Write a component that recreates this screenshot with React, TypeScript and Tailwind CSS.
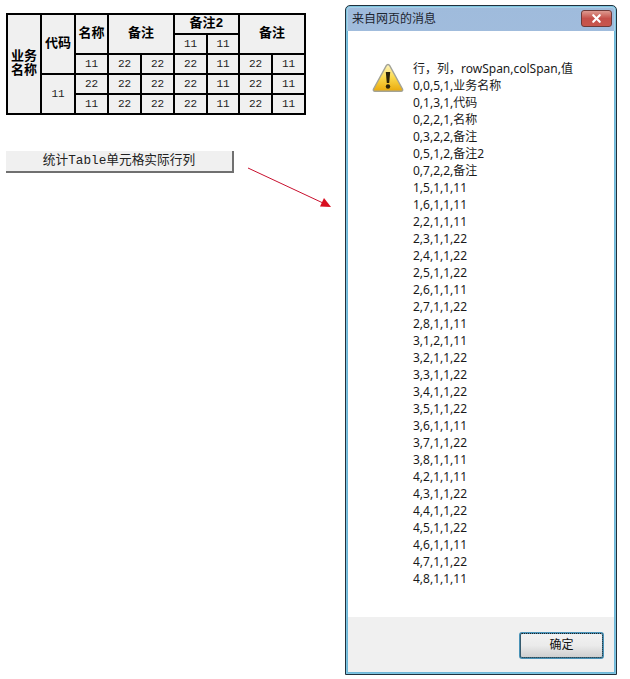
import React from "react";
import { X } from "lucide-react";

const LINES = [
  "行，列，rowSpan,colSpan,值",
  "0,0,5,1,业务名称",
  "0,1,3,1,代码",
  "0,2,2,1,名称",
  "0,3,2,2,备注",
  "0,5,1,2,备注2",
  "0,7,2,2,备注",
  "1,5,1,1,11",
  "1,6,1,1,11",
  "2,2,1,1,11",
  "2,3,1,1,22",
  "2,4,1,1,22",
  "2,5,1,1,22",
  "2,6,1,1,11",
  "2,7,1,1,22",
  "2,8,1,1,11",
  "3,1,2,1,11",
  "3,2,1,1,22",
  "3,3,1,1,22",
  "3,4,1,1,22",
  "3,5,1,1,22",
  "3,6,1,1,11",
  "3,7,1,1,22",
  "3,8,1,1,11",
  "4,2,1,1,11",
  "4,3,1,1,22",
  "4,4,1,1,22",
  "4,5,1,1,22",
  "4,6,1,1,11",
  "4,7,1,1,22",
  "4,8,1,1,11",
];

const COLS = [34, 34, 33, 33, 33, 33, 32, 33, 33];

const Th: React.FC<{ rowSpan?: number; colSpan?: number; children: React.ReactNode }> = ({
  rowSpan,
  colSpan,
  children,
}) => (
  <td
    rowSpan={rowSpan}
    colSpan={colSpan}
    className="border-2 border-black p-0 text-center align-middle text-[13px] leading-[14px] font-bold"
  >
    {children}
  </td>
);

const Td: React.FC<{ rowSpan?: number; children: React.ReactNode }> = ({ rowSpan, children }) => (
  <td rowSpan={rowSpan} className="border-2 border-black p-0 text-center align-middle text-[11px] leading-none text-[#222]">
    {children}
  </td>
);

const DataCells = () => (
  <>
    <Td>22</Td>
    <Td>22</Td>
    <Td>22</Td>
    <Td>11</Td>
    <Td>22</Td>
    <Td>11</Td>
  </>
);

const WarningIcon = () => (
  <svg width="32" height="30" viewBox="0 0 32 30" className="shrink-0">
    <defs>
      <linearGradient id="warn" x1="0" y1="0" x2="0" y2="1">
        <stop offset="0" stopColor="#fff6c0" />
        <stop offset="0.5" stopColor="#fad84a" />
        <stop offset="1" stopColor="#e9a90c" />
      </linearGradient>
    </defs>
    <path
      d="M16 1.500c.8 0 1.300.5 1.700 1.200l12.800 23.300c.6 1.200-.1 2.200-1.400 2.200H2.900c-1.300 0-2-1-1.400-2.200L14.300 2.700C14.700 2 15.200 1.500 16 1.500z"
      fill="url(#warn)"
      stroke="#a3a396"
      strokeWidth="1.400"
    />
    <path d="M13.800 9h4.400l-1 11h-2.400z" fill="#2a2208" />
    <circle cx="16" cy="23.500" r="2.200" fill="#2a2208" />
  </svg>
);

export default function App() {
  return (
    <div className="relative flex h-[679px] w-[630px] overflow-hidden bg-white text-black [font-family:'Liberation_Mono','Noto_Sans_CJK_SC',monospace]">
      <div className="flex w-[345px] shrink-0 flex-col pl-[6px] pt-[13px]">
        <table className="w-[300px] table-fixed border-collapse border-2 border-black bg-[#f0f0f0]">
          <colgroup>
            {COLS.map((w, i) => (
              <col key={i} style={{ width: w }} />
            ))}
          </colgroup>
          <tbody>
            <tr className="h-[20px]">
              <Th rowSpan={5}>
                业务
                <br />
                名称
              </Th>
              <Th rowSpan={3}>代码</Th>
              <Th rowSpan={2}>名称</Th>
              <Th rowSpan={2} colSpan={2}>
                备注
              </Th>
              <Th colSpan={2}>备注2</Th>
              <Th rowSpan={2} colSpan={2}>
                备注
              </Th>
            </tr>
            <tr className="h-[20px]">
              <Td>11</Td>
              <Td>11</Td>
            </tr>
            <tr className="h-[20px]">
              <Td>11</Td>
              <DataCells />
            </tr>
            <tr className="h-[20px]">
              <Td rowSpan={2}>11</Td>
              <Td>22</Td>
              <DataCells />
            </tr>
            <tr className="h-[20px]">
              <Td>11</Td>
              <DataCells />
            </tr>
          </tbody>
        </table>
        <button className="mt-[36px] flex h-[22px] w-[228px] items-center justify-center border-r-2 border-b-2 border-r-[#707070] border-b-[#707070] bg-[#f0f0f0] text-[12.700px] leading-none text-[#222]">
          统计Table单元格实际行列
        </button>
      </div>

      <svg width="90" height="50" viewBox="0 0 90 50" className="absolute left-[245px] top-[165px]">
        <path d="M3 3 L78 38" stroke="#c8102e" strokeWidth="1" fill="none" />
        <path d="M86 42 L75 41.500 L79 33 Z" fill="#d80f20" />
      </svg>

      <div className="mt-[5px] flex h-[670px] w-[272px] shrink-0 flex-col rounded-t-[5px] border border-[#20303c] bg-gradient-to-b from-[#9fbbdc] to-[#c3d6ea] px-[1px] pb-[1px] shadow-[inset_0_0_0_1px_#7ec4e0,inset_0_0_0_2px_#a8cfe6] [font-family:'Noto_Sans','Noto_Sans_CJK_SC',sans-serif]">
        <div className="flex h-[25px] shrink-0 items-center justify-between pl-[5px] pr-[3px]">
          <span className="text-[12px] leading-none text-[#1c2530]">来自网页的消息</span>
          <div className="flex h-[17px] w-[31px] items-center justify-center rounded-[3px] border border-[#6e3a38] bg-gradient-to-b from-[#dd9a90] via-[#c4504a] to-[#c8564c]">
            <X size={13} strokeWidth={4} className="text-white" />
          </div>
        </div>
        <div className="flex min-h-0 flex-1 flex-col border-x border-b border-[#6fb7d8] bg-white">
          <div className="flex flex-1 pl-[24px] pt-[29px]">
            <div className="mt-[3px] h-[30px]">
              <WarningIcon />
            </div>
            <div className="ml-[9px] text-[12px] leading-[17px] text-[#1a1a1a]">
              {LINES.map((line) => (
                <div key={line} className="whitespace-nowrap">
                  {line}
                </div>
              ))}
            </div>
          </div>
          <div className="flex h-[55px] shrink-0 items-center justify-end bg-[#f0f0f0] pr-[10px] pt-[1px]">
            <button className="flex h-[27px] w-[85px] items-center justify-center rounded-[3px] border-2 border-[#4a93b8] bg-gradient-to-b from-[#f2f2f2] via-[#ebebeb] to-[#cfcfcf] text-[12px] leading-none text-[#111] outline-1 -outline-offset-2 outline-dotted outline-[#222]">
              确定
            </button>
          </div>
        </div>
      </div>
    </div>
  );
}
